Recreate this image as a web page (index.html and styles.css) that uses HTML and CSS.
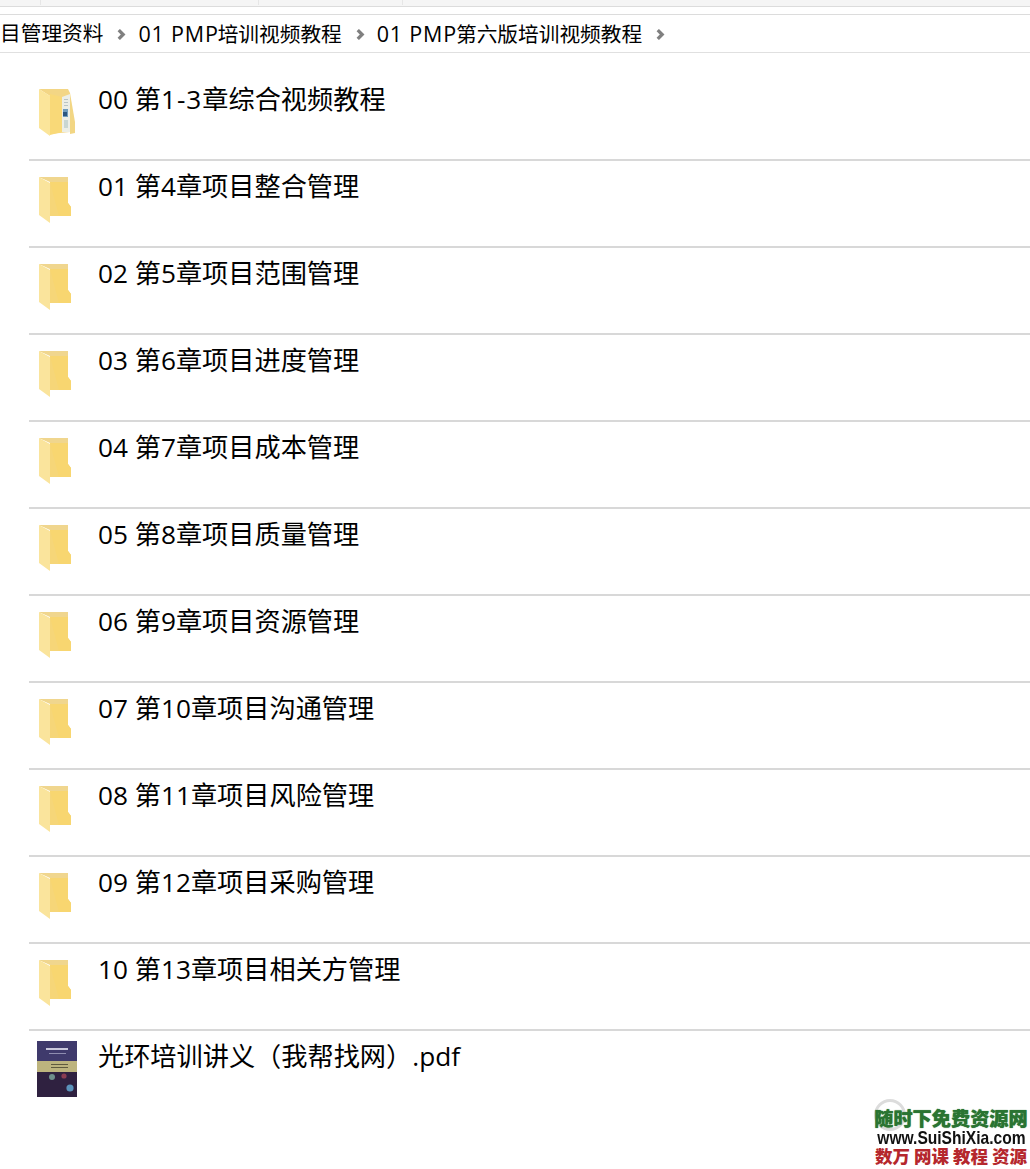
FILE: index.html
```html
<!DOCTYPE html>
<html lang="zh-CN">
<head>
  <meta charset="UTF-8" />
  <meta name="viewport" content="width=device-width, initial-scale=1.0"/>
  <title>01 PMP第六版培训视频教程</title>
  <link rel="stylesheet" href="styles.css">
</head>
<body>

  <!-- Hidden folder icon, reused by every row -->
  <svg class="defs" width="0" height="0">
    <symbol id="folder" viewBox="0 0 40 50">
      <polygon points="2,2 31,2 31,28 34,32 34,41 13,41 13,6" fill="#f6d678"/>
      <polygon points="2,2 31,2 31,7 13,7" fill="#f0d68e"/>
      <polygon points="13,7 31,7 31,28 34,32 34,41 22,41" fill="#f8d670"/>
      <polygon points="2,2 13,8 13,48 2,40" fill="#fae49c"/>
    </symbol>
  </svg>

  <div class="tabstrip">
    <span class="tab tab-first"></span>
    <span class="tab tab-second"></span>
    <span class="tab"></span>
  </div>

  <nav class="crumbs">
    <span class="crumb">目管理资料</span>
    <svg class="arrow" viewBox="0 0 8 10"><polyline points="1.5,1 5.5,5 1.5,9"/></svg>
    <span class="crumb"><span class="latin">01 PMP</span>培训视频教程</span>
    <svg class="arrow" viewBox="0 0 8 10"><polyline points="1.5,1 5.5,5 1.5,9"/></svg>
    <span class="crumb"><span class="latin">01 PMP</span>第六版培训视频教程</span>
    <svg class="arrow" viewBox="0 0 8 10"><polyline points="1.5,1 5.5,5 1.5,9"/></svg>
  </nav>

  <ul class="files">
    <li class="file">
      <svg class="icon" viewBox="0 0 40 50">
        <polygon points="2,1 31,1 33,5 33,44 13,46 13,8" fill="#f3d685"/>
        <polygon points="33,5 38,34 38,45 33,46" fill="#f2d684"/>
        <polygon points="13,6 25,9 25,44 13,47" fill="#f9d978"/>
        <polygon points="25,9 33,6 33,44 25,44" fill="#eceee6"/>
        <rect x="27" y="11" width="4" height="1" fill="#b9c4c4"/>
        <rect x="27" y="14" width="4" height="1" fill="#b9c4c4"/>
        <rect x="27" y="17" width="4" height="1" fill="#b9c4c4"/>
        <rect x="26" y="21" width="5" height="8" fill="#6f9cbd"/>
        <rect x="26" y="24" width="4" height="4" fill="#2b5680"/>
        <rect x="27" y="32" width="4" height="8" fill="#c9d6d2"/>
        <polygon points="2,1 13,8 13,48 2,40" fill="#fbe59a"/>
      </svg>
      <span class="name">00 第<span class="wide">1-3</span>章综合视频教程</span>
    </li>
    <li class="file"><svg class="icon" viewBox="0 0 40 50"><use href="#folder"/></svg><span class="name">01 第4章项目整合管理</span></li>
    <li class="file"><svg class="icon" viewBox="0 0 40 50"><use href="#folder"/></svg><span class="name">02 第5章项目范围管理</span></li>
    <li class="file"><svg class="icon" viewBox="0 0 40 50"><use href="#folder"/></svg><span class="name">03 第6章项目进度管理</span></li>
    <li class="file"><svg class="icon" viewBox="0 0 40 50"><use href="#folder"/></svg><span class="name">04 第7章项目成本管理</span></li>
    <li class="file"><svg class="icon" viewBox="0 0 40 50"><use href="#folder"/></svg><span class="name">05 第8章项目质量管理</span></li>
    <li class="file"><svg class="icon" viewBox="0 0 40 50"><use href="#folder"/></svg><span class="name">06 第9章项目资源管理</span></li>
    <li class="file"><svg class="icon" viewBox="0 0 40 50"><use href="#folder"/></svg><span class="name">07 第10章项目沟通管理</span></li>
    <li class="file"><svg class="icon" viewBox="0 0 40 50"><use href="#folder"/></svg><span class="name">08 第11章项目风险管理</span></li>
    <li class="file"><svg class="icon" viewBox="0 0 40 50"><use href="#folder"/></svg><span class="name">09 第12章项目采购管理</span></li>
    <li class="file"><svg class="icon" viewBox="0 0 40 50"><use href="#folder"/></svg><span class="name">10 第13章项目相关方管理</span></li>
    <li class="file">
      <!-- PDF cover thumbnail -->
      <svg class="thumb" viewBox="0 0 40 56">
        <rect width="40" height="56" fill="#3f3a6c"/>
        <rect x="0" y="20" width="40" height="11" fill="#bdb47e"/>
        <rect x="0" y="31" width="40" height="25" fill="#2f2140"/>
        <rect x="9" y="7" width="22" height="2" fill="#c9c8dc"/>
        <rect x="12" y="12" width="17" height="1" fill="#8f8db0"/>
        <rect x="14" y="23" width="17" height="1" fill="#5f5a3e"/>
        <rect x="14" y="26" width="17" height="1" fill="#5f5a3e"/>
        <circle cx="15" cy="36" r="3" fill="#6f8f8c"/>
        <circle cx="27" cy="35" r="2.6" fill="#8a3d52"/>
        <circle cx="33" cy="47" r="3.6" fill="#5b93bb"/>
      </svg>
      <span class="name">光环培训讲义（我帮找网）.pdf</span>
    </li>
  </ul>

  <div class="watermark">
    <div class="wm-ring"></div>
    <div class="wm-top">随时下免费资源网</div>
    <div class="wm-url"><span>www.SuiShiXia.com</span></div>
    <div class="wm-bottom">数万 网课 教程 资源</div>
  </div>

</body>
</html>
```

FILE: styles.css
```css
* {
  box-sizing: border-box;
}

html, body {
  margin: 0;
  padding: 0;
  height: 1169px;
  overflow: hidden;
}

body {
  position: relative;
  background: #fff;
  color: #000;
  font-family: "Open Sans", "Noto Sans CJK SC", sans-serif;
}

.defs {
  position: absolute;
}

.tabstrip {
  display: flex;
  height: 7px;
  background: #f5f5f5;
  border-bottom: 1px solid #dcdcdc;
}

.tab {
  height: 5px;
  border-right: 1px solid #e6e6e6;
}

.tab-first {
  width: 41px;
}

.tab-second {
  width: 218px;
}

.tab:last-child {
  width: 144px;
}

.crumbs {
  display: flex;
  align-items: center;
  height: 39px;
  margin-top: 7px;
  border-top: 1px solid #dcdcdc;
  border-bottom: 1px solid #e0e0e0;
  font-size: 20.7px;
  white-space: nowrap;
}

.crumb {
  line-height: 37px;
}

.latin {
  font-size: 21.5px;
  letter-spacing: 0.8px;
  margin-right: -1px;
}

.arrow {
  width: 9px;
  height: 11px;
  margin: 1px 12px 0 14px;
  fill: none;
  stroke: #808080;
  stroke-width: 3;
}

.files {
  list-style: none;
  margin: 21px 0 0 29px;
  padding: 0;
}

.file {
  display: flex;
  height: 87px;
  border-bottom: 2px solid #d8d8d8;
}

.file:last-child {
  border-bottom: none;
}

.icon {
  flex: none;
  width: 40px;
  height: 50px;
  margin: 14px 0 0 8px;
  filter: blur(0.4px);
}

.thumb {
  flex: none;
  width: 40px;
  height: 56px;
  margin: 10px 0 0 8px;
  filter: blur(0.5px);
}

.name {
  margin: 7px 0 0 21px;
  font-size: 26.2px;
  line-height: 36px;
}

.wide {
  letter-spacing: 1px;
}

.watermark {
  position: absolute;
  right: 1px;
  bottom: 3px;
  width: 156px;
  text-align: center;
  font-weight: 700;
  white-space: nowrap;
}

.wm-ring {
  position: absolute;
  top: -8px;
  left: 1px;
  width: 32px;
  height: 32px;
  border: 3px solid #dcdcdc;
  border-radius: 50%;
  z-index: -1;
}

.wm-top {
  height: 22px;
  color: #2a7432;
  font-size: 19.2px;
  line-height: 22px;
  font-family: "Noto Sans CJK SC", sans-serif;
  font-weight: 900;
  text-shadow: 0 0 1px #2a7432;
}

.wm-url {
  display: flex;
  justify-content: center;
  height: 17px;
  color: #111;
  font-size: 19px;
  line-height: 17px;
  font-family: "Liberation Sans", sans-serif;
}

.wm-url span {
  transform: scaleX(0.82);
}

.wm-bottom {
  height: 20px;
  color: #b5272d;
  font-size: 17.5px;
  line-height: 20px;
  font-family: "Noto Sans CJK SC", serif;
  font-weight: 900;
}
```
